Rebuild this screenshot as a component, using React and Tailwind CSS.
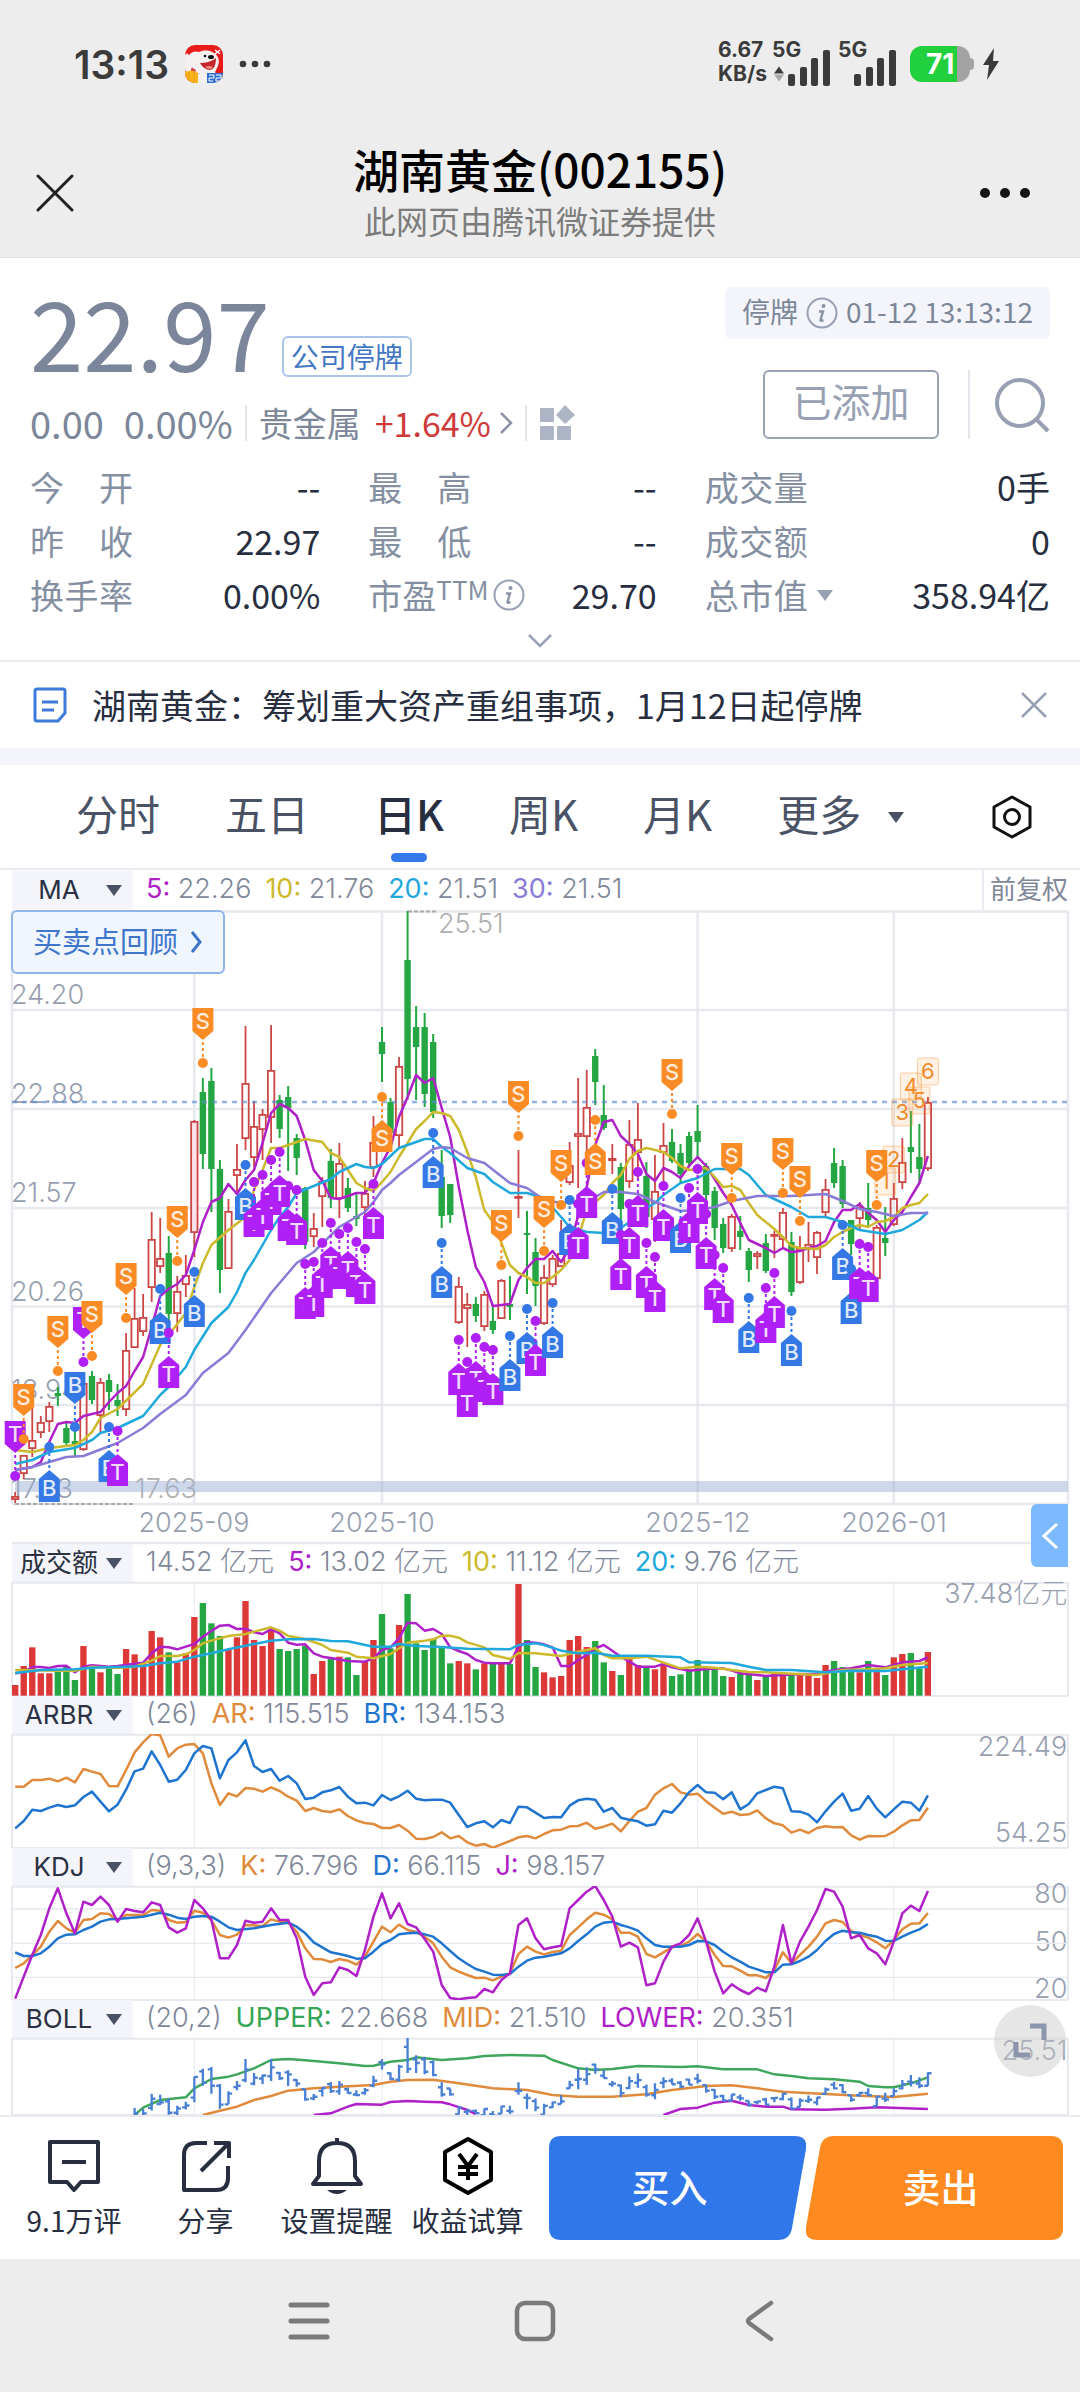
import React from "react";

const RED = "#cc4646";
const GREEN = "#24a742";
const PURPLE = "#b020c8";
const YELLOW = "#cdb92c";
const CYAN = "#1fa8dc";
const VIOLET = "#8a7bd6";
const ORANGE = "#e08a3c";
const BLUE = "#1e74cf";

// One row per trading day: colour, high, body top, body bottom, low.
const CANDLES = `r 1492 1496 1500 1503|r 1455 1455 1474 1479|r 1407 1440 1449 1457|r 1416 1422 1433 1438|r 1402 1406 1422 1432|g 1387 1393 1396 1406|g 1422 1428 1443 1447|g 1430 1441 1445 1457|r 1383 1383 1450 1451|g 1371 1376 1400 1404|r 1378 1382 1416 1433|g 1374 1380 1392 1410|g 1384 1400 1406 1416|r 1333 1350 1410 1416|r 1288 1318 1348 1348|r 1294 1317 1332 1336|r 1212 1239 1288 1302|r 1218 1258 1267 1273|g 1236 1253 1314 1325|r 1276 1291 1314 1332|r 1255 1275 1285 1297|r 1120 1121 1233 1257|g 1078 1092 1154 1169|g 1068 1081 1169 1212|g 1160 1169 1270 1293|r 1199 1211 1269 1269|r 1144 1169 1176 1193|r 1026 1083 1139 1150|r 1101 1126 1158 1167|r 1109 1114 1130 1160|r 1025 1070 1118 1143|g 1095 1100 1129 1138|g 1086 1097 1108 1171|g 1134 1138 1158 1175|g 1187 1188 1242 1249|r 1213 1228 1237 1247|r 1177 1181 1197 1227|g 1149 1161 1198 1208|r 1143 1163 1199 1218|g 1178 1188 1208 1212|g 1193 1216 1219 1226|r 1181 1193 1208 1217|r 1116 1142 1168 1177|g 1027 1042 1054 1082|g 1098 1102 1133 1140|r 1057 1066 1136 1147|g 911 960 1079 1100|g 1006 1027 1047 1100|g 1013 1027 1094 1107|g 1034 1042 1112 1118|g 1150 1177 1216 1228|g 1184 1184 1215 1223|r 1277 1286 1323 1324|r 1293 1304 1309 1347|g 1297 1304 1316 1322|r 1291 1294 1327 1331|g 1305 1321 1330 1334|r 1279 1280 1319 1319|g 1276 1304 1307 1320|r 1150 1196 1198 1218|g 1211 1233 1235 1294|g 1238 1252 1286 1306|r 1265 1277 1324 1325|r 1255 1258 1285 1287|r 1220 1253 1267 1267|r 1142 1165 1183 1185|r 1078 1133 1137 1188|r 1070 1107 1137 1165|g 1049 1056 1082 1105|g 1085 1115 1128 1130|r 1144 1158 1161 1174|g 1163 1167 1209 1230|r 1120 1144 1182 1188|r 1103 1139 1153 1180|g 1162 1176 1217 1228|r 1155 1191 1220 1242|r 1123 1145 1153 1183|g 1129 1142 1161 1163|g 1144 1153 1174 1183|g 1132 1136 1163 1165|g 1105 1131 1142 1157|g 1163 1166 1195 1207|g 1187 1191 1228 1240|g 1218 1224 1248 1253|r 1214 1216 1249 1252|g 1216 1231 1237 1250|g 1248 1251 1270 1282|r 1251 1253 1257 1269|g 1234 1243 1271 1273|r 1231 1234 1236 1258|r 1208 1212 1240 1247|g 1232 1242 1292 1296|r 1236 1248 1283 1284|r 1222 1244 1250 1262|r 1231 1232 1258 1274|r 1179 1189 1213 1216|g 1148 1163 1183 1188|g 1160 1166 1204 1208|g 1220 1220 1244 1255|r 1202 1207 1219 1230|g 1183 1208 1220 1226|r 1225 1227 1279 1280|g 1207 1238 1243 1256|r 1183 1198 1225 1226|r 1138 1162 1183 1189|g 1111 1147 1152 1173|g 1124 1157 1169 1183|r 1097 1102 1169 1171`
  .split("|")
  .map((row) => {
    const [c, ...v] = row.split(" ");
    const [high, top, bottom, low] = v.map(Number);
    return { up: c === "r", high, top, bottom, low };
  });

const VOLUME_TOPS = [
  435, 378, 322, 400, 400, 387, 378, 420, 318, 382, 397, 385, 402, 327, 343, 370, 273, 292, 337, 367, 340, 231, 189, 250,
  288, 328, 292, 183, 300, 318, 265, 327, 333, 327, 318, 402, 363, 352, 350, 352, 405, 365, 300, 222, 325, 255, 162, 310,
  330, 297, 320, 370, 363, 370, 388, 370, 372, 370, 372, 132, 300, 381, 397, 412, 408, 300, 288, 321, 303, 367, 393, 405,
  355, 375, 378, 388, 372, 408, 403, 388, 360, 385, 385, 408, 411, 402, 402, 420, 411, 402, 402, 400, 402, 402, 414, 375,
  363, 381, 385, 397, 363, 385, 405, 352, 342, 339, 385, 336,
];

const MA = {
  ma5: "0,1470 2,1467 3,1462 4,1442 5,1424 6,1422 7,1423 8,1416 9,1414 10,1412 11,1402 12,1393 13,1386 14,1371 15,1357 16,1327 17,1296 18,1289 19,1284 20,1275 21,1250 22,1222 23,1202 24,1198 25,1184 26,1194 27,1180 28,1170 29,1143 30,1113 31,1104 32,1108 33,1116 34,1140 35,1170 36,1181 37,1198 38,1199 39,1196 40,1193 41,1193 42,1183 43,1163 44,1147 45,1117 46,1097 47,1075 48,1083 49,1078 50,1108 51,1137 52,1187 53,1230 54,1267 55,1282 56,1306 57,1305 58,1304 59,1280 60,1268 61,1259 62,1259 63,1251 64,1262 65,1248 66,1215 67,1187 68,1145 69,1122 70,1120 71,1136 72,1144 73,1154 74,1174 75,1181 76,1168 77,1172 78,1178 79,1166 80,1157 81,1166 82,1179 83,1193 84,1205 85,1223 86,1240 87,1244 88,1248 89,1253 90,1248 91,1252 92,1251 93,1248 94,1246 95,1241 96,1222 97,1210 98,1210 99,1204 100,1213 101,1220 102,1232 103,1220 104,1212 105,1197 106,1183 107,1156",
  ma10: "0,1450 2,1452 4,1448 7,1445 8,1440 9,1432 10,1418 12,1409 15,1384 17,1345 18,1335 20,1313 21,1287 22,1263 23,1245 25,1230 27,1217 28,1190 29,1170 30,1148 31,1148 32,1145 34,1139 36,1142 37,1153 38,1157 39,1170 40,1183 41,1188 42,1191 43,1182 44,1172 45,1157 46,1143 47,1129 48,1121 49,1112 50,1113 51,1116 52,1130 53,1152 54,1177 55,1210 56,1222 57,1243 58,1265 59,1273 60,1277 61,1283 62,1283 63,1277 64,1270 65,1260 66,1238 67,1210 68,1202 69,1195 70,1183 71,1175 72,1159 73,1151 74,1148 75,1150 76,1152 77,1158 78,1166 79,1170 81,1168 82,1177 83,1187 84,1186 85,1190 86,1203 87,1215 88,1222 89,1229 90,1237 91,1246 92,1248 94,1249 95,1245 96,1237 97,1232 98,1228 99,1225 100,1227 101,1222 102,1221 103,1217 104,1208 105,1205 106,1203 107,1194",
  ma20: "0,1464 2,1460 4,1452 7,1448 9,1440 10,1433 12,1428 15,1416 17,1395 18,1387 20,1367 21,1350 23,1323 25,1307 26,1292 27,1273 28,1260 30,1230 31,1217 32,1207 33,1193 35,1186 37,1179 38,1172 40,1164 41,1167 42,1168 43,1164 44,1156 45,1148 47,1142 48,1139 49,1139 50,1147 51,1153 53,1168 55,1174 56,1182 58,1193 60,1193 62,1198 64,1217 65,1227 67,1232 69,1233 71,1228 72,1222 73,1213 75,1203 76,1195 78,1183 80,1178 82,1169 85,1169 86,1175 88,1195 91,1207 93,1217 95,1217 97,1222 99,1230 102,1234 104,1230 106,1220 107,1212",
  ma30: "0,1470 2,1467 4,1462 6,1457 8,1456 12,1443 15,1428 17,1414 20,1395 22,1373 25,1353 27,1330 30,1293 33,1263 35,1252 38,1227 41,1212 42,1202 43,1190 44,1183 45,1175 47,1162 49,1149 50,1147 51,1148 53,1158 55,1163 58,1183 60,1188 62,1200 64,1203 67,1202 69,1192 71,1192 73,1194 75,1202 78,1211 80,1210 82,1207 84,1201 87,1196 91,1196 95,1194 97,1201 99,1209 101,1212 103,1216 105,1213 107,1213",
};

const VOLUME_MA = {
  ma5: "0,400 1,397 2,381 3,381 4,384 5,378 6,377 7,397 8,380 9,376 11,380 12,378 15,368 16,340 17,320 18,322 19,328 20,320 21,312 22,290 23,273 24,257 25,255 26,267 27,266 28,277 29,282 30,268 31,280 32,308 33,314 34,313 35,340 36,350 37,354 39,363 41,365 42,355 43,330 44,322 45,295 46,248 47,250 48,272 49,267 50,282 51,322 52,333 53,342 54,360 55,368 56,370 58,370 59,320 60,307 61,308 62,313 63,322 64,378 65,378 66,360 67,345 68,325 69,315 70,332 71,350 72,365 73,380 75,380 76,372 77,382 79,392 81,387 83,385 84,392 85,400 87,405 88,408 90,405 92,402 94,403 96,390 98,385 100,375 102,382 104,367 106,363 107,352",
  ma10: "0,390 5,392 7,392 9,380 12,384 14,380 16,362 17,348 19,348 20,343 21,330 22,310 23,302 25,288 27,282 28,275 30,262 31,272 32,288 34,297 36,315 37,330 39,338 40,350 42,355 44,342 46,308 48,302 49,298 50,287 51,287 52,293 53,307 55,322 56,345 58,357 59,340 61,340 64,348 66,335 68,325 69,345 70,355 72,355 74,350 76,368 78,385 80,380 82,383 84,390 86,396 88,397 90,400 94,405 97,390 100,388 102,385 104,375 107,369",
  ma20: "0,399 3,390 7,388 9,383 13,380 15,378 17,370 19,365 21,350 23,340 25,328 27,317 28,312 30,302 32,298 35,297 37,303 39,304 42,320 44,320 45,312 47,318 50,321 53,326 58,328 59,315 61,310 62,315 64,332 66,340 68,338 70,347 74,347 78,352 79,367 84,369 86,380 88,390 91,390 95,397 98,392 102,393 104,388 107,380",
};

const ARBR = {
  ar: "0,740 1,740 2,720 3,720 4,716 5,724 6,713 7,727 8,687 9,695 10,702 11,738 12,739 13,690 14,637 15,607 16,582 17,586 18,650 19,625 20,614 21,612 22,640 23,730 24,795 25,760 26,769 27,744 28,746 29,755 30,742 31,753 32,770 33,782 34,813 35,804 36,813 37,816 38,808 39,828 40,841 41,849 42,852 43,864 44,864 45,855 46,872 47,896 48,897 49,891 50,877 51,895 52,888 53,907 54,917 55,912 56,923 57,913 58,903 59,892 60,888 61,895 62,882 63,871 64,869 65,859 66,858 67,848 68,866 69,860 70,851 71,874 72,843 73,815 74,804 75,764 76,745 77,732 78,757 79,764 80,761 81,784 82,803 83,821 84,815 85,825 86,823 87,811 88,835 89,850 90,856 91,878 92,869 93,879 94,864 95,859 96,862 97,861 98,886 99,899 100,888 101,889 102,888 103,875 104,856 105,841 106,840 107,803",
  br: "0,865 1,843 2,809 3,813 4,803 5,795 6,801 7,796 8,771 9,755 10,785 11,814 12,794 13,749 14,694 15,686 16,634 17,675 18,725 19,719 20,690 21,640 22,618 23,625 24,715 25,660 26,637 27,601 28,678 29,696 30,687 31,722 32,708 33,730 34,777 35,773 36,757 37,751 38,741 39,770 40,790 41,788 42,796 43,765 44,780 45,769 46,752 47,776 48,781 49,779 50,779 51,788 52,825 53,861 54,850 55,844 56,862 57,840 58,849 59,800 60,802 61,818 62,834 63,831 64,832 65,797 66,781 67,776 68,779 69,815 70,804 71,833 72,839 73,844 74,857 75,853 76,812 77,818 78,790 79,757 80,735 81,757 82,758 83,778 84,757 85,808 86,792 87,760 88,750 89,740 90,745 91,814 92,815 93,824 94,847 95,814 96,785 97,761 98,812 99,806 100,768 101,806 102,832 103,808 104,785 105,788 106,812 107,766",
};

const KDJ = {
  j: "0,476 1,410 2,345 3,285 4,205 5,145 6,220 7,280 8,185 9,195 10,170 11,195 12,245 13,207 14,213 15,217 16,187 17,195 18,262 19,278 20,265 21,180 22,205 23,240 24,355 25,355 26,315 27,242 28,248 29,245 30,205 31,240 32,240 33,295 34,410 35,465 36,430 37,427 38,382 39,390 40,408 41,330 42,230 43,160 44,235 45,190 46,252 47,262 48,297 49,335 50,435 51,474 52,478 53,474 54,472 55,447 56,457 57,420 58,400 59,255 60,235 61,295 62,328 63,322 64,317 65,205 66,180 67,155 68,138 69,180 70,230 71,320 72,308 73,322 74,436 75,430 76,365 77,320 78,310 79,285 80,235 81,305 82,395 83,460 84,433 85,450 86,462 87,443 88,454 89,380 90,255 91,370 92,305 93,260 94,210 95,147 96,155 97,200 98,295 99,285 100,325 101,340 102,373 103,305 104,220 105,197 106,213 107,153",
  k: "0,384 1,370 2,345 3,320 4,275 5,243 6,265 7,278 8,240 9,237 10,220 11,222 12,243 13,225 15,225 16,210 17,212 18,240 19,248 20,246 21,212 22,218 23,240 24,285 25,293 26,284 27,255 29,258 30,238 31,245 32,247 33,275 34,325 35,357 36,358 37,366 38,357 39,362 40,374 41,350 42,305 43,260 44,277 45,254 46,270 47,276 48,290 49,310 50,350 51,382 52,395 53,405 54,414 55,413 56,421 57,410 58,400 59,342 60,320 61,335 62,343 63,336 64,332 65,285 66,262 67,238 68,218 69,224 70,238 71,278 72,278 73,290 74,342 75,352 76,337 77,322 78,318 79,305 80,282 81,305 82,345 83,378 84,379 85,392 86,406 87,406 88,414 89,390 90,337 91,370 92,345 93,320 94,290 95,250 96,240 97,246 98,273 99,285 100,293 101,307 102,325 103,300 104,268 105,251 106,250 107,219",
  d: "0,337 1,348 2,348 3,340 4,320 5,295 6,284 7,283 8,270 9,260 10,245 11,238 12,237 13,235 15,230 17,218 18,224 19,233 20,237 21,230 22,228 23,230 24,245 25,262 26,270 28,265 30,255 32,248 33,260 34,280 35,307 36,322 37,337 38,342 39,348 40,356 41,355 42,335 43,312 44,300 45,283 46,280 47,278 48,283 49,290 50,310 51,333 52,355 53,372 54,387 55,395 56,404 57,405 58,402 59,380 60,362 61,353 62,350 63,345 64,340 65,325 66,303 67,283 68,260 69,248 70,245 71,255 72,262 73,272 74,295 75,315 76,320 78,320 79,315 80,303 81,304 82,315 83,335 84,352 85,365 86,380 87,388 88,397 89,397 90,374 91,373 92,363 93,350 94,330 95,303 96,282 97,272 98,277 99,278 100,285 101,290 102,302 103,303 104,290 105,278 106,268 107,252",
};

const BOLL = {
  upper:
    "14,825 15,803 17,780 20,772 21,745 23,717 25,710 26,703 28,685 30,660 32,657 34,661 36,665 38,670 41,678 42,677 44,665 46,660 47,652 48,655 50,660 53,655 55,648 58,645 62,647 63,660 66,685 68,690 70,687 73,678 78,681 80,679 83,688 87,688 89,703 91,708 93,715 96,718 99,725 100,738 102,742 103,742 105,730 107,712",
  mid: "22,825 24,812 26,800 28,780 30,768 32,752 35,745 38,740 42,735 44,725 46,720 49,719 52,730 56,745 60,750 63,765 66,770 70,770 74,763 77,750 81,738 84,736 87,745 90,755 95,762 99,767 103,771 107,761",
  lowerA: "35,825 37,820 39,800 40,792 43,794 44,786 46,783 48,785 50,787 51,793 53,810 54,822",
  lowerB: "76,825 78,807 80,803 82,788 84,782 86,795 88,800 90,800 91,808 95,809 98,806 101,802 107,807",
};

// kind, day index, dot position, direction
const MARKERS = `T 0 1476 d|S 1 1439 d|B 4 1447 u|S 5 1371 d|T 8 1362 d|B 7 1427 d|S 9 1356 d|B 11 1427 u|T 12 1431 u|S 13 1318 d|B 17 1289 u|T 18 1333 u|S 19 1261 d|B 21 1272 u|S 22 1063 d|B 27 1165 u|T 28 1182 u|T 29 1175 u|T 30 1160 u|T 32 1186 u|T 31 1152 u|T 33 1190 u|T 34 1264 u|T 35 1262 u|T 36 1243 u|T 37 1223 u|T 38 1234 u|T 39 1228 u|T 40 1242 u|T 41 1249 u|T 42 1184 u|S 43 1097 u|B 49 1133 u|B 50 1243 u|T 52 1340 u|T 53 1362 u|T 54 1338 u|T 55 1347 u|T 56 1350 u|S 57 1265 d|B 58 1336 u|S 59 1136 d|B 60 1309 u|T 61 1321 u|S 62 1251 d|B 63 1303 u|S 64 1205 d|B 65 1200 u|T 66 1204 u|T 67 1163 u|S 68 1120 u|B 70 1189 u|T 71 1235 u|T 72 1204 u|T 73 1172 u|T 74 1243 u|T 75 1257 u|T 76 1186 u|S 77 1114 d|B 78 1198 u|T 79 1188 u|T 80 1169 u|T 81 1214 u|T 82 1255 u|T 83 1268 u|S 84 1198 d|B 86 1298 u|T 88 1288 u|T 89 1273 u|S 90 1193 d|B 91 1311 u|S 92 1221 d|B 97 1225 u|B 98 1269 u|T 99 1244 u|T 100 1247 u|S 101 1205 d`
  .split("|")
  .map((m) => {
    const [kind, i, dot, dir] = m.split(" ");
    return { kind, i: Number(i), dot: Number(dot), down: dir === "d" };
  });

const MARKER_COLORS = { S: "#fb8b24", B: "#3478e6", T: "#b01ff5" };
const COUNTS = [
  ["1", 102, 1168],
  ["2", 103, 1146],
  ["3", 104, 1099],
  ["4", 105, 1073],
  ["5", 106, 1087],
  ["6", 107, 1058],
];
const MONTHS = [21, 43, 80, 103];
const CHART_FONT = "font-['Inter','Noto_Sans_CJK_SC',sans-serif]";

const dayX = (i) => 15.2 + 8.53 * i;
const points = (series, k) =>
  series
    .split(" ")
    .map((p) => {
      const [i, y] = p.split(",").map(Number);
      return `${(dayX(i) * k).toFixed(1)},${y}`;
    })
    .join(" ");

function Line({ series, color, k = 1 }) {
  return (
    <polyline points={points(series, k)} fill="none" stroke={color} strokeWidth={2.5 * k} strokeLinejoin="round" />
  );
}

function Marker({ kind, i, dot, down }) {
  const x = dayX(i);
  const c = MARKER_COLORS[kind];
  const s = down ? -1 : 1;
  const apex = dot + 23 * s;
  const shoulder = apex + 9 * s;
  const end = apex + 32 * s;
  return (
    <g>
      <line x1={x} x2={x} y1={dot} y2={apex} stroke={c} strokeWidth="2" strokeDasharray="3 3" />
      <circle cx={x} cy={dot} r="5" fill={c} />
      <path
        d={`M${x} ${apex}L${x + 10.5} ${shoulder}V${end}H${x - 10.5}V${shoulder}Z`}
        fill={c}
      />
      <text
        x={x}
        y={down ? end + 21 : end - 6}
        textAnchor="middle"
        fontSize="22"
        fill="#ffffff"
        fillOpacity="0.85"
        fontWeight="500"
      >
        {kind}
      </text>
    </g>
  );
}

function MainChart() {
  return (
    <svg viewBox="0 910 1080 634" className={`block w-full h-auto overflow-visible ${CHART_FONT}`} role="img" aria-label="日K线图">
      <g stroke="#e7e9ee" strokeWidth="2.500" fill="none">
        <path d="M12 911.5H1068M12 1010H1068M12 1109H1068M12 1208H1068M12 1306.5H1068M12 1405H1068M12 1504H1068M12 1543H1068" />
        <path d="M12 911V1504M1068 911V1504" />
        {MONTHS.map((m) => (
          <path key={m} d={`M${dayX(m)} 911V1504`} />
        ))}
      </g>
      <g fill="#979fb0" fontSize="27" fontWeight="300">
        <text x="11" y="1004">24.20</text>
        <text x="11" y="1103">22.88</text>
        <text x="11" y="1202">21.57</text>
        <text x="11" y="1301">20.26</text>
        <text x="11" y="1399">18.94</text>
        <text x="11" y="1498">17.63</text>
        <g textAnchor="middle">
          <text x="194" y="1532">2025-09</text>
          <text x="382" y="1532">2025-10</text>
          <text x="698" y="1532">2025-12</text>
          <text x="894" y="1532">2026-01</text>
        </g>
      </g>
      <g fill="#b0b0b0" fontSize="27" fontWeight="300">
        <text x="438" y="933">25.51</text>
        <text x="135" y="1498">17.63</text>
      </g>
      <path d="M408 911.5H438M15 1504H135" stroke="#aaaaaa" strokeWidth="2" strokeDasharray="4 2" />
      {CANDLES.map((c, i) => {
        const x = dayX(i);
        const h = Math.max(2, c.bottom - c.top);
        return c.up ? (
          <g key={i} stroke={RED} strokeWidth="1.800" fill="none">
            <path d={`M${x} ${c.high}V${c.top}M${x} ${c.bottom}V${c.low}`} />
            <rect x={x - 3.2} y={c.top + 0.9} width="6.4" height={Math.max(1, h - 1.8)} fill={i === 21 ? "#fbe3e8" : "none"} />
          </g>
        ) : (
          <g key={i} fill={GREEN}>
            <rect x={x - 1} y={c.high} width="2" height={c.low - c.high} />
            <rect x={x - 3.2} y={c.top} width="6.4" height={h} />
          </g>
        );
      })}
      <path d="M12 1102H1068" stroke="#5a8ad6" strokeOpacity="0.65" strokeWidth="2.500" strokeDasharray="5 5" />
      <Line series={MA.ma5} color={PURPLE} />
      <Line series={MA.ma10} color={YELLOW} />
      <Line series={MA.ma20} color={CYAN} />
      <Line series={MA.ma30} color={VIOLET} />
      {COUNTS.map(([n, i, y]) => (
        <g key={n}>
          <rect x={dayX(i) - 10.5} y={y} width="21" height="27" rx="2" fill="#fb8b24" fillOpacity="0.12" stroke="#fb8b24" strokeOpacity="0.4" />
          <text x={dayX(i)} y={y + 21} textAnchor="middle" fontSize="22" fill="#f28a2a">
            {n}
          </text>
        </g>
      ))}
      <rect x="15" y="1481" width="1053" height="11" fill="#9db2d6" fillOpacity="0.5" />
      {MARKERS.map((m, n) => (
        <Marker key={n} {...m} />
      ))}
    </svg>
  );
}

// Lower panes use a drawing grid three times finer than the page width.
function PaneChart({ top, height, label, labels, children }) {
  const bottom = top + height;
  return (
    <svg viewBox={`0 ${top} 3240 ${height}`} className={`block w-full h-auto overflow-visible ${CHART_FONT}`} role="img" aria-label={label}>
      <g stroke="#e7e9ee" fill="none" strokeWidth="6">
        <path d={`M36 ${top + 2}H3204M36 ${bottom}H3204M36 ${top}V${bottom}M3204 ${top}V${bottom}`} />
        {MONTHS.map((m) => (
          <path key={m} strokeWidth="3" d={`M${dayX(m) * 3} ${top}V${bottom}`} />
        ))}
      </g>
      {labels.map(([text, y]) => (
        <text key={text} x="3202" y={y} textAnchor="end" fontSize="81" fontWeight="300" fill="#979fb0">
          {text}
        </text>
      ))}
      <svg x="0" y={top} width="3240" height={height} viewBox={`0 ${top} 3240 ${height}`}>
        {children}
      </svg>
    </svg>
  );
}

function Caret({ className }) {
  return (
    <svg viewBox="0 0 16 12" className={className} aria-hidden="true">
      <path d="M0 1H16L8 12Z" fill="currentColor" />
    </svg>
  );
}

function PaneHeader({ name, items, children }) {
  return (
    <div className={`flex h-[38px] items-stretch pl-3 text-[27px] leading-9 ${CHART_FONT}`}>
      <button type="button" className="flex w-[121px] shrink-0 items-center bg-[#f4f5fa] pr-[11px] text-[#2a3142]">
        <span className="flex-1 text-center text-[26px] font-normal whitespace-nowrap">{name}</span>
        <Caret className="h-3 w-4 text-[#4a5366]" />
      </button>
      <div className="flex flex-1 gap-[14px] pl-[13px] font-light whitespace-nowrap text-[#7f8899]">
        {items.map(([key, value, tone]) => (
          <span key={key + value}>
            {key && <span className={`${tone} font-normal`}>{key}: </span>}
            {value}
          </span>
        ))}
      </div>
      {children}
    </div>
  );
}

function Info() {
  return (
    <svg viewBox="0 0 32 32" className="size-8 shrink-0" fill="none" aria-hidden="true">
      <circle cx="16" cy="16" r="14.500" stroke="#98a1b3" strokeWidth="2" />
      <circle cx="17.500" cy="9" r="2" fill="#8a94a6" />
      <path d="M13 14.500h4l-2.500 8.500q-.3 1.500 3 .2" stroke="#8a94a6" strokeWidth="2.400" />
    </svg>
  );
}

function Signal() {
  return (
    <svg viewBox="0 0 42 36" className="h-9 w-[42px]" fill="#3b3b3b" aria-hidden="true">
      <rect x="0" y="24" width="7" height="12" rx="2" />
      <rect x="12" y="17" width="7" height="19" rx="2" />
      <rect x="23" y="8" width="7" height="28" rx="2" />
      <rect x="35" y="0" width="7" height="36" rx="2" />
    </svg>
  );
}

function StatusBar() {
  return (
    <div className="flex h-32 items-center justify-between pr-20 pl-[74px] text-[#3b3b3b]">
      <div className="flex items-center gap-4">
        <span className="text-[39px] leading-none font-semibold font-['Inter',sans-serif]">13:13</span>
        <svg viewBox="0 0 38 38" className="size-[38px]" aria-hidden="true">
          <defs>
            <clipPath id="app-shape">
              <rect width="38" height="38" rx="10" />
            </clipPath>
          </defs>
          <g clipPath="url(#app-shape)">
            <rect width="38" height="38" fill="#e81a1a" />
            <path d="M0 10q2-3 4 0q4-5 10-3q8-4 15 1q7 4 4 13l-3 6q4 4 2 11H12q-2-6 2-10q-5 3-8-1Q0 32 0 22Z" fill="#f4f0f0" />
            <path d="M6 24q1-3 3 0q3 0 1 4q-3 2-4-1Z" fill="#d64a48" />
            <path d="M15 18q10 0 16-5q0 11-6 12q-6 0-10-7Z" fill="#c4242c" />
            <path d="M20 22q4-2 8 0q-3 4-8 0Z" fill="#f28c80" />
            <ellipse cx="26" cy="12" rx="3" ry="2" fill="#111" />
            <circle cx="20" cy="11" r="1.300" fill="#111" />
            <path d="M30 5l5 4m0-4l-5 4" stroke="#fff" strokeWidth="1.500" />
            <path d="M0 27q7-3 13 1v10H0Z" fill="#f9b31c" />
            <path d="M4 27v11M9 27v11" stroke="#e79a0b" />
            <rect x="22" y="28" width="16" height="10" fill="#2f6fd0" />
            <path d="M24 30h5v3h-5v3h4m3-6h5v3h-5v3h5" stroke="#fff" fill="none" />
          </g>
        </svg>
        <svg viewBox="0 0 32 8" className="h-2 w-8" fill="currentColor" aria-hidden="true">
          <circle cx="4" cy="4" r="3.300" />
          <circle cx="16" cy="4" r="3.300" />
          <circle cx="28" cy="4" r="3.300" />
        </svg>
      </div>
      <div className="flex items-center pb-1 font-bold text-[21px] leading-6 font-['Inter',sans-serif]">
        <div className="w-[50px] whitespace-nowrap">
          6.67
          <br />
          KB/s
        </div>
        <div className="relative flex h-12 items-end pl-[18px]">
          <span className="absolute top-0 left-1">5G</span>
          <svg viewBox="0 0 10 15" className="mr-[4px] mb-1 -ml-[12px] h-4 w-[10px]" aria-hidden="true">
            <path d="M5 0l5 7H0Z" fill="#3b3b3b" />
            <path d="M5 15l5-7H0Z" fill="#a8a8a8" />
          </svg>
          <Signal />
        </div>
        <div className="relative ml-2 flex h-12 items-end pl-4">
          <span className="absolute top-0 left-0">5G</span>
          <Signal />
        </div>
        <div className="ml-[14px] flex items-center pt-1">
          <div className="flex h-9 w-[60px] items-center rounded-[12px] bg-linear-to-r from-[#20d03c] from-78% to-[#a3a3a3] to-78% text-[28px] text-white">
            <span className="pl-[16px]">71</span>
          </div>
          <span className="h-3 w-1 rounded-r-sm bg-[#a3a3a3]" />
        </div>
        <svg viewBox="0 0 18 32" className="mt-1 ml-2 h-8 w-[18px]" fill="#3b3b3b" aria-hidden="true">
          <path d="M12 0L1 17h6L5 32L17 13h-6Z" />
        </svg>
      </div>
    </div>
  );
}

function Header() {
  return (
    <header className="border-b border-[#e2e2e2] bg-[#ededed]">
      <StatusBar />
      <div className="flex h-[129px] items-center justify-between px-9">
        <button type="button" aria-label="关闭" className="w-16">
          <svg viewBox="0 0 38 38" className="size-[38px]" aria-hidden="true">
            <path d="M2 2L36 36M36 2L2 36" stroke="#222" strokeWidth="3" strokeLinecap="round" />
          </svg>
        </button>
        <div className="text-center">
          <h1 className="text-[46px] leading-[54px] font-medium whitespace-nowrap text-black">湖南黄金(002155)</h1>
          <p className="text-[32px] leading-[50px] text-[#7c7c7c]">此网页由腾讯微证券提供</p>
        </div>
        <button type="button" aria-label="更多" className="flex w-16 justify-end gap-[10px] pr-[14px]">
          <span className="size-[10px] shrink-0 rounded-full bg-[#151515]" />
          <span className="size-[10px] shrink-0 rounded-full bg-[#151515]" />
          <span className="size-[10px] shrink-0 rounded-full bg-[#151515]" />
        </button>
      </div>
    </header>
  );
}

function Quote() {
  return (
    <section className="flex justify-between px-[30px] pt-[25px] text-[#7c8799]">
      <div>
        <div className="flex h-[98px] items-end">
          <span className="text-[96px] leading-[100px] text-[#7b869a]">22.97</span>
          <span className="mb-1 ml-3 rounded-md border-2 border-[#aac5ec] px-[7px] text-[28px] leading-[37px] text-[#4377c4]">公司停牌</span>
        </div>
        <div className="mt-[14px] flex h-14 items-center text-[34px] whitespace-nowrap">
          <span className="text-[38px]">0.00</span>
          <span className="ml-5 text-[38px]">0.00%</span>
          <span className="mx-3 h-9 w-[2px] bg-[#e3e5ea]" />
          <a href="#sector" className="flex items-center">
            贵金属
            <span className="ml-[14px] text-[#cf3b3b]">+1.64%</span>
            <svg viewBox="0 0 14 24" className="ml-2 h-6 w-[14px]" fill="none" aria-hidden="true">
              <path d="M2 2L12 12L2 22" stroke="#8a94a6" strokeWidth="2.500" />
            </svg>
          </a>
          <span className="mx-3 h-9 w-[2px] bg-[#e3e5ea]" />
          <svg viewBox="0 0 36 36" className="size-9" fill="#adb4c3" aria-hidden="true">
            <rect x="1" y="3" width="14" height="14" rx="1" />
            <rect x="1" y="21" width="14" height="14" rx="1" />
            <rect x="18" y="21" width="14" height="14" rx="1" />
            <path d="M26 0L36 10L26 19L17 10Z" />
          </svg>
        </div>
      </div>
      <div className="flex flex-col items-end pt-1">
        <div className="flex h-[52px] items-center gap-2 rounded-md bg-[#f4f5fa] px-[17px] pb-1 text-[28px] whitespace-nowrap">
          停牌
          <span className="pt-1">
            <Info />
          </span>
          01-12 13:13:12
        </div>
        <div className="mt-[31px] flex items-center">
          <button type="button" className="h-[69px] w-[176px] rounded-md border-2 border-[#9aa3b4] pb-2 text-[39px] leading-none text-[#98a1b3]">
            已添加
          </button>
          <span className="mr-[24px] ml-[29px] h-[69px] w-[2px] bg-[#e3e5ea]" />
          <button type="button" aria-label="搜索">
            <svg viewBox="0 0 56 56" className="size-14" fill="none" stroke="#98a1b3" strokeWidth="4" aria-hidden="true">
              <circle cx="26" cy="26" r="23" />
              <path d="M42 42L54 54" />
            </svg>
          </button>
        </div>
      </div>
    </section>
  );
}

const STATS = [
  [["今开", "--"], ["昨收", "22.97"], ["换手率", "0.00%"]],
  [["最高", "--"], ["最低", "--"], ["市盈", "29.70"]],
  [["成交量", "0手"], ["成交额", "0"], ["总市值", "358.94亿"]],
];

function StatLabel({ name }) {
  if (name === "市盈") {
    return (
      <dt className="flex items-center">
        市盈<span className="pb-3 text-[26px]">TTM</span>
        <span className="ml-1">
          <Info />
        </span>
      </dt>
    );
  }
  return (
    <dt className="flex items-center">
      <span className="flex w-[103px] justify-between">
        {name.split("").map((ch) => (
          <span key={ch}>{ch}</span>
        ))}
      </span>
      {name === "总市值" && <Caret className="ml-2 h-3 w-[18px] text-[#98a1b3]" />}
    </dt>
  );
}

function Stats() {
  return (
    <section className="px-[30px] pt-[9px]">
      <div className="grid grid-cols-[290fr_288fr_345fr] gap-12">
        {STATS.map((column, n) => (
          <dl key={n} className="text-[34px] whitespace-nowrap text-[#8490a2]">
            {column.map(([name, value]) => (
              <div key={name} className="flex h-[54px] items-center justify-between">
                <StatLabel name={name} />
                <dd className="text-[#272e3f]">{value}</dd>
              </div>
            ))}
          </dl>
        ))}
      </div>
      <button type="button" aria-label="展开" className="mx-auto flex h-[38px] items-center justify-center">
        <svg viewBox="0 0 24 14" className="h-[14px] w-6" fill="none" aria-hidden="true">
          <path d="M1 1L12 12L23 1" stroke="#98a1b3" strokeWidth="2.500" />
        </svg>
      </button>
    </section>
  );
}

function Notice() {
  return (
    <section className="flex h-[88px] items-center border-t-2 border-[#e9ebf0] px-[33px]">
      <svg viewBox="0 0 34 36" className="h-9 w-[34px] shrink-0" fill="none" stroke="#3c7bdc" strokeWidth="3" aria-hidden="true">
        <path d="M2 4q0-2 2-2H30q2 0 2 2V26L25 34H4q-2 0-2-2Z" />
        <path d="M9 15H25M9 23H21" />
      </svg>
      <p className="ml-[25px] flex-1 text-[34px] whitespace-nowrap text-[#272e3f]">湖南黄金：筹划重大资产重组事项，1月12日起停牌</p>
      <button type="button" aria-label="关闭公告">
        <svg viewBox="0 0 26 26" className="size-[26px]" aria-hidden="true">
          <path d="M1 1L25 25M25 1L1 25" stroke="#98a1b3" strokeWidth="2.500" />
        </svg>
      </button>
    </section>
  );
}

function Tabs() {
  return (
    <nav className="flex h-[105px] items-stretch border-b-2 border-[#e9ebf0] pr-[48px] pl-[76px] text-[42px] whitespace-nowrap text-[#4a5366]">
      <div className="flex flex-1 gap-[65px]">
        {["分时", "五日", "日K", "周K", "月K"].map((tab) => (
          <button
            key={tab}
            type="button"
            aria-pressed={tab === "日K"}
            className={tab === "日K" ? "relative pb-2 font-medium text-[#272e3f]" : "relative pb-2"}
          >
            {tab}
            {tab === "日K" && <span className="absolute bottom-[6px] left-1/2 h-[9px] w-9 -translate-x-1/2 rounded-full bg-[#3478ea]" />}
          </button>
        ))}
        <button type="button" className="flex items-center gap-[25px]">
          <span className="pb-2">更多</span>
          <Caret className="h-3 w-5" />
        </button>
      </div>
      <button type="button" aria-label="设置">
        <svg viewBox="0 0 40 44" className="h-11 w-10" fill="none" stroke="#111" strokeWidth="3" strokeLinejoin="round" aria-hidden="true">
          <path d="M20 2L38 12V32L20 42L2 32V12Z" />
          <circle cx="20" cy="22" r="7.500" />
        </svg>
      </button>
    </nav>
  );
}

function Charts() {
  return (
    <main>
      <div className="flex h-10 items-center">
        <div className="flex-1">
          <PaneHeader
            name="MA"
            items={[
              ["5", "22.26", "text-[#b020c8]"],
              ["10", "21.76", "text-[#cdb92c]"],
              ["20", "21.51", "text-[#1fa8dc]"],
              ["30", "21.51", "text-[#8a7bd6]"],
            ]}
          />
        </div>
        <button type="button" className="mr-3 h-10 border-l-2 border-[#e9ebf0] pb-1 pl-[6px] text-[26px] leading-9 text-[#7f8899]">
          前复权
        </button>
      </div>
      <div className="relative">
        <MainChart />
        <button
          type="button"
          className="absolute top-0 left-[11px] flex h-16 items-center rounded-md border-2 border-[#8fb5e8] bg-[#f0f6fe] pr-[21px] pb-1 pl-[20px] text-[29px] whitespace-nowrap text-[#3f76cc]"
        >
          买卖点回顾
          <svg viewBox="0 0 12 24" className="mt-1 ml-3 h-6 w-3" fill="none" aria-hidden="true">
            <path d="M2 2L10 12L2 22" stroke="currentColor" strokeWidth="3" />
          </svg>
        </button>
        <button type="button" aria-label="展开侧栏" className="absolute right-3 -bottom-[23px] z-10 flex h-[63px] w-[37px] items-center justify-center rounded-l-md bg-[#7db9ff]">
          <svg viewBox="0 0 16 28" className="h-7 w-4" fill="none" aria-hidden="true">
            <path d="M15 2L2 14L15 26" stroke="#fff" strokeWidth="3" />
          </svg>
        </button>
      </div>

      <PaneHeader
        name="成交额"
        items={[
          ["", "14.52 亿元"],
          ["5", "13.02 亿元", "text-[#b020c8]"],
          ["10", "11.12 亿元", "text-[#cdb92c]"],
          ["20", "9.76 亿元", "text-[#1fa8dc]"],
        ]}
      />
      <PaneChart top={126} height={342} label="成交额" labels={[["37.48亿元", 190]]}>
        {VOLUME_TOPS.map((y, i) => (
          <rect key={i} x={dayX(i) * 3 - 9.5} y={y} width="19" height={467 - y} fill={CANDLES[i].up ? "#dc3838" : GREEN} />
        ))}
        <Line series={VOLUME_MA.ma5} color={PURPLE} k={3} />
        <Line series={VOLUME_MA.ma10} color={YELLOW} k={3} />
        <Line series={VOLUME_MA.ma20} color={CYAN} k={3} />
      </PaneChart>

      <PaneHeader
        name="ARBR"
        items={[
          ["", "(26)"],
          ["AR", "115.515", "text-[#e08a3c]"],
          ["BR", "134.153", "text-[#1e74cf]"],
        ]}
      />
      <PaneChart top={582} height={342} label="ARBR" labels={[["224.49", 648], ["54.25", 907]]}>
        <Line series={ARBR.ar} color={ORANGE} k={3} />
        <Line series={ARBR.br} color={BLUE} k={3} />
      </PaneChart>

      <PaneHeader
        name="KDJ"
        items={[
          ["", "(9,3,3)"],
          ["K", "76.796", "text-[#e08a3c]"],
          ["D", "66.115", "text-[#1e74cf]"],
          ["J", "98.157", "text-[#b020c8]"],
        ]}
      />
      <PaneChart top={138} height={342} label="KDJ" labels={[["80", 190], ["50", 332], ["20", 475]]}>
        <path d="M36 207H3204M36 310H3204M36 412H3204" stroke="#e7e9ee" strokeWidth="4" />
        <Line series={KDJ.k} color={ORANGE} k={3} />
        <Line series={KDJ.d} color={BLUE} k={3} />
        <Line series={KDJ.j} color={PURPLE} k={3} />
      </PaneChart>

      <div className="relative">
        <PaneHeader
          name="BOLL"
          items={[
            ["", "(20,2)"],
            ["UPPER", "22.668", "text-[#35a455]"],
            ["MID", "21.510", "text-[#e08a3c]"],
            ["LOWER", "20.351", "text-[#b020c8]"],
          ]}
        />
        <PaneChart top={594} height={231} label="BOLL" labels={[["25.51", 660]]}>
          <Line series={BOLL.upper} color="#3fa65c" k={3} />
          <Line series={BOLL.mid} color={ORANGE} k={3} />
          <Line series={BOLL.lowerA} color={PURPLE} k={3} />
          <Line series={BOLL.lowerB} color={PURPLE} k={3} />
          {CANDLES.map((c, i) => {
            if (i < 14) return null;
            const x = dayX(i) * 3;
            const y = (v) => 593 + 0.559 * (v - 911);
            const open = y(c.up ? c.bottom : c.top);
            const close = y(c.up ? c.top : c.bottom);
            return (
              <path
                key={i}
                d={`M${x} ${y(c.high)}V${y(c.low)}M${x - 11} ${open}H${x}M${x} ${close}H${x + 11}`}
                stroke="#4a80d4"
                strokeWidth="7"
                fill="none"
              />
            );
          })}
        </PaneChart>
        <button type="button" aria-label="全屏" className="absolute top-[5px] right-[14px] flex size-[72px] items-center justify-center rounded-full bg-[#c8c8c8]/45">
          <svg viewBox="0 0 40 36" className="h-9 w-10" fill="none" stroke="#8c96aa" strokeWidth="5" aria-hidden="true">
            <path d="M20 3H34V17M6 19V32H20" />
          </svg>
        </button>
      </div>
    </main>
  );
}

function Action({ label, width, children }) {
  return (
    <button type="button" className={`flex flex-col items-center ${width}`}>
      <svg viewBox="0 0 60 60" className="size-[60px]" fill="none" stroke="#272e3f" strokeWidth="4" strokeLinejoin="round" aria-hidden="true">
        {children}
      </svg>
      <span className="mt-[6px] text-[28px] leading-9 whitespace-nowrap text-[#272e3f]">{label}</span>
    </button>
  );
}

function BottomBar() {
  return (
    <footer className="flex h-[144px] items-start border-t-2 border-[#e9ebf0] pt-[19px] pr-[17px] pl-[8px]">
      <Action label="9.1万评" width="w-[132px]">
        <path d="M6 6H54V46H37L30 54L23 46H6ZM18 26H42" />
      </Action>
      <Action label="分享" width="w-[131px]">
        <path d="M31 7H20Q8 7 8 19V54H40Q52 54 52 42V30M25 35L52 8M38 7H53V22" />
      </Action>
      <Action label="设置提醒" width="w-[131px]">
        <path d="M30 2V7M12 40V25Q12 7 30 7Q48 7 48 25V40L54 48H6Z" />
        <path d="M20 54H40Q30 62 20 54Z" fill="#272e3f" stroke="none" />
      </Action>
      <Action label="收益试算" width="w-[131px]">
        <path d="M30 3L53 16V44L30 57L7 44V16Z" stroke="#000" />
        <path d="M21 18L30 30L39 18M30 30V44M20 31H40M20 38H40" stroke="#000" />
      </Action>
      <div className="ml-4 flex flex-1">
        <button type="button" className="relative h-[104px] flex-1 pb-1 text-[38px] font-medium text-white">
          <svg viewBox="0 0 257 104" preserveAspectRatio="none" className="absolute inset-0 h-full w-full" aria-hidden="true">
            <path d="M12 0H246Q259 0 257 13L243 92Q241 104 229 104H12Q0 104 0 92V12Q0 0 12 0Z" fill="#3077ea" />
          </svg>
          <span className="relative pr-4">买入</span>
        </button>
        <button type="button" className="relative h-[104px] flex-1 pb-1 text-[38px] font-medium text-white">
          <svg viewBox="0 0 257 104" preserveAspectRatio="none" className="absolute inset-0 h-full w-full" aria-hidden="true">
            <path d="M28 0H245Q257 0 257 12V92Q257 104 245 104H11Q-2 104 0 91L14 12Q16 0 28 0Z" fill="#ff8a1f" />
          </svg>
          <span className="relative pl-3">卖出</span>
        </button>
      </div>
    </footer>
  );
}

function SystemNav() {
  return (
    <div className="flex h-[133px] items-center justify-center gap-[184px] bg-[#ededed] pr-[10px] pb-[9px]">
      <button type="button" aria-label="最近任务">
        <svg viewBox="0 0 42 42" className="size-[42px]" stroke="#7a7a7a" strokeWidth="5" strokeLinecap="round" aria-hidden="true">
          <path d="M3 5H39M3 21H39M3 37H39" />
        </svg>
      </button>
      <button type="button" aria-label="主屏幕">
        <svg viewBox="0 0 42 42" className="size-[42px]" fill="none" stroke="#7a7a7a" strokeWidth="4.500" aria-hidden="true">
          <rect x="3" y="3" width="36" height="36" rx="8" />
        </svg>
      </button>
      <button type="button" aria-label="返回">
        <svg viewBox="0 0 42 42" className="size-[42px]" fill="none" stroke="#7a7a7a" strokeWidth="4.500" strokeLinecap="round" strokeLinejoin="round" aria-hidden="true">
          <path d="M31 3L9 19Q7 21 9 23L31 39" />
        </svg>
      </button>
    </div>
  );
}

export default function App() {
  return (
    <div className="bg-white font-['Noto_Sans_CJK_SC',sans-serif] leading-none">
      <Header />
      <Quote />
      <Stats />
      <Notice />
      <div className="h-[17px] bg-[#f4f5fa]" />
      <Tabs />
      <Charts />
      <BottomBar />
      <SystemNav />
    </div>
  );
}
